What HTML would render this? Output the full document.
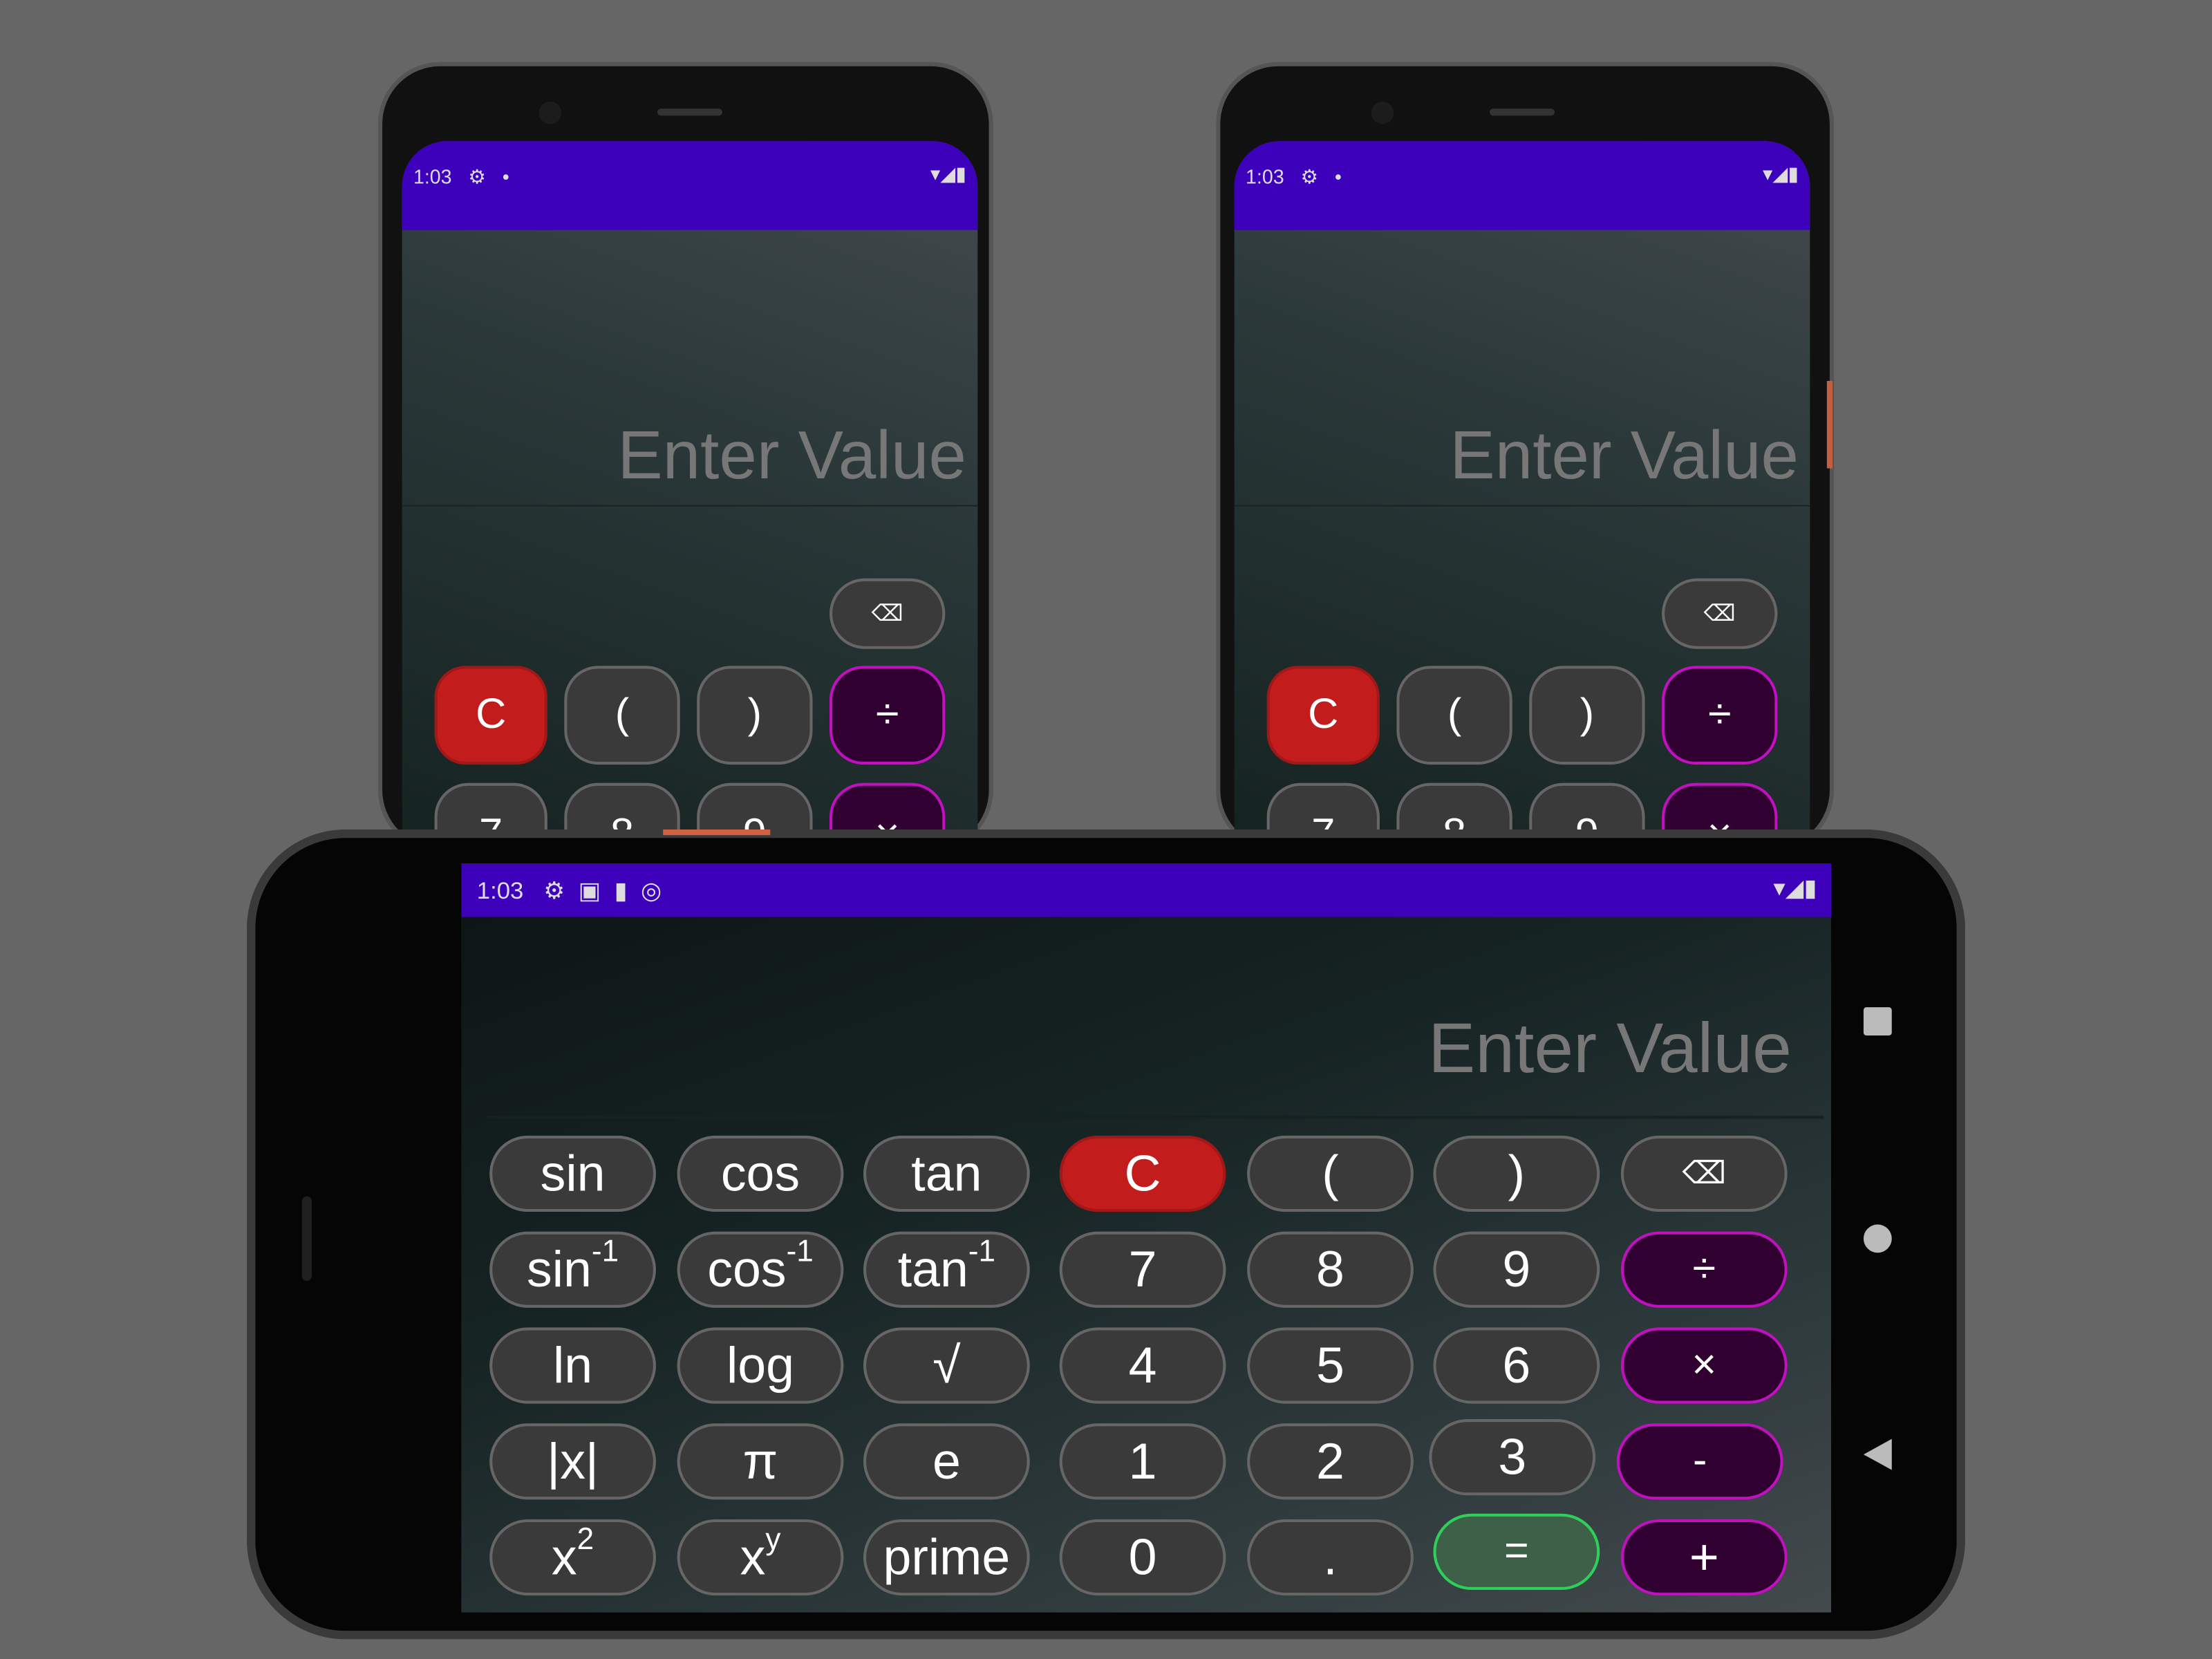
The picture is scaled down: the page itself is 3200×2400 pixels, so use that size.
<!DOCTYPE html>
<html><head><meta charset="utf-8"><style>
html,body{margin:0;padding:0;background:#666;width:3200px;height:2400px;overflow:hidden}
#w{position:absolute;left:0;top:0;width:1568px;height:1176px;transform:scale(2.040816);transform-origin:0 0;font-family:"Liberation Sans",sans-serif}
.a{position:absolute}
.b{position:absolute;box-sizing:border-box;border:2px solid #666;background:#3a3a3a;color:#fff;display:flex;align-items:center;justify-content:center;border-radius:30px}
.op{background:#300030;border-color:#c010c0}
.red{background:#c21c1c;border-color:#a01818}
.eq{background:#3e5f48;border-color:#2ed05a}
.sb{background:#3d00bb;color:#ddd;font-size:14px}
.t{align-items:flex-start;padding-top:18px;font-size:30px}
sup{font-size:0.6em;vertical-align:0;position:relative;top:-0.6em}
</style></head><body><div id="w">

<div class="a" style="left:268px;top:44px;width:436px;height:560px;border-radius:44px;background:#111;border:3px solid #555;box-sizing:border-box"></div>
<div class="a" style="left:862px;top:44px;width:438px;height:560px;border-radius:44px;background:#111;border:3px solid #555;box-sizing:border-box"></div>
<div class="a" style="left:1295px;top:270px;width:4px;height:62px;background:#c06040"></div>

<div class="a" style="left:285px;top:100px;width:408px;height:500px;border-radius:32px 32px 0 0;overflow:hidden;background:linear-gradient(200deg,#434b4e 0%,#2c393a 40%,#142220 100%)">
 <div class="a sb" style="left:0;top:0;width:408px;height:63px"><span class="a" style="left:8px;top:17px">1:03 &nbsp; ⚙ &nbsp; •</span><span class="a" style="right:8px;top:15px">▾◢▮</span></div>
 <div class="a" style="right:8px;top:196px;font-size:48px;color:#777">Enter Value</div>
 <div class="a" style="left:0;top:258px;width:408px;height:1px;background:#1a2222"></div>
 <div class="b" style="left:303px;top:310px;width:82px;height:50px;font-size:16px">⌫</div>
 <div class="b red" style="left:23px;top:372px;width:80px;height:70px;border-radius:22px;font-size:30px">C</div>
 <div class="b" style="left:115px;top:372px;width:82px;height:70px;border-radius:24px;font-size:30px">(</div>
 <div class="b" style="left:209px;top:372px;width:82px;height:70px;border-radius:24px;font-size:30px">)</div>
 <div class="b op" style="left:303px;top:372px;width:82px;height:70px;border-radius:24px;font-size:30px">÷</div>
 <div class="b t" style="left:23px;top:455px;width:80px;height:70px;border-radius:24px">7</div>
 <div class="b t" style="left:115px;top:455px;width:82px;height:70px;border-radius:24px">8</div>
 <div class="b t" style="left:209px;top:455px;width:82px;height:70px;border-radius:24px">9</div>
 <div class="b op t" style="left:303px;top:455px;width:82px;height:70px;border-radius:24px">×</div>
</div>
<div class="a" style="left:875px;top:100px;width:408px;height:500px;border-radius:32px 32px 0 0;overflow:hidden;background:linear-gradient(200deg,#434b4e 0%,#2c393a 40%,#142220 100%)">
 <div class="a sb" style="left:0;top:0;width:408px;height:63px"><span class="a" style="left:8px;top:17px">1:03 &nbsp; ⚙ &nbsp; •</span><span class="a" style="right:8px;top:15px">▾◢▮</span></div>
 <div class="a" style="right:8px;top:196px;font-size:48px;color:#777">Enter Value</div>
 <div class="a" style="left:0;top:258px;width:408px;height:1px;background:#1a2222"></div>
 <div class="b" style="left:303px;top:310px;width:82px;height:50px;font-size:16px">⌫</div>
 <div class="b red" style="left:23px;top:372px;width:80px;height:70px;border-radius:22px;font-size:30px">C</div>
 <div class="b" style="left:115px;top:372px;width:82px;height:70px;border-radius:24px;font-size:30px">(</div>
 <div class="b" style="left:209px;top:372px;width:82px;height:70px;border-radius:24px;font-size:30px">)</div>
 <div class="b op" style="left:303px;top:372px;width:82px;height:70px;border-radius:24px;font-size:30px">÷</div>
 <div class="b t" style="left:23px;top:455px;width:80px;height:70px;border-radius:24px">7</div>
 <div class="b t" style="left:115px;top:455px;width:82px;height:70px;border-radius:24px">8</div>
 <div class="b t" style="left:209px;top:455px;width:82px;height:70px;border-radius:24px">9</div>
 <div class="b op t" style="left:303px;top:455px;width:82px;height:70px;border-radius:24px">×</div>
</div>
<div class="a" style="left:466px;top:77px;width:46px;height:5px;border-radius:3px;background:#333"></div>
<div class="a" style="left:1056px;top:77px;width:46px;height:5px;border-radius:3px;background:#333"></div>
<div class="a" style="left:382px;top:72px;width:16px;height:16px;border-radius:50%;background:#1c1c1c"></div>
<div class="a" style="left:972px;top:72px;width:16px;height:16px;border-radius:50%;background:#1c1c1c"></div>

<div class="a" style="left:175px;top:588px;width:1218px;height:574px;border-radius:70px;background:#050505;border:6px solid #3a3a3a;box-sizing:border-box"></div>
<div class="a" style="left:470px;top:588px;width:76px;height:4px;background:#d06040"></div>
<div class="a" style="left:214px;top:848px;width:7px;height:60px;border-radius:4px;background:#1f1f1f"></div>
<div class="a" style="left:327px;top:612px;width:971px;height:531px;overflow:hidden;background:linear-gradient(160deg,#0c1414 0%,#172424 40%,#2e3a3c 75%,#434a4c 100%)">
 <div class="a sb" style="left:0;top:0;width:971px;height:38px"><span class="a" style="left:11px;top:10px;font-size:17px">1:03 &nbsp; ⚙ &nbsp;▣ &nbsp;▮ &nbsp;◎</span><span class="a" style="right:10px;top:8px;font-size:17px">▾◢▮</span></div>
 <div class="a" style="right:28px;top:102px;font-size:50px;color:#777">Enter Value</div>
 <div class="a" style="left:18px;top:179px;width:948px;height:2px;background:#182020"></div>
</div>
<div class="a" style="left:1321px;top:714px;width:20px;height:20px;background:#bbb;border-radius:2px"></div>
<div class="a" style="left:1321px;top:868px;width:20px;height:20px;background:#bbb;border-radius:50%"></div>
<div class="a" style="left:1321px;top:1020px;width:0;height:0;border-top:11px solid transparent;border-bottom:11px solid transparent;border-right:20px solid #bbb"></div>

<div style="font-size:36px">
<div class="b" style="left:347px;top:805px;width:118px;height:54px">sin</div>
<div class="b" style="left:480px;top:805px;width:118px;height:54px">cos</div>
<div class="b" style="left:612px;top:805px;width:118px;height:54px">tan</div>
<div class="b red" style="left:751px;top:805px;width:118px;height:54px">C</div>
<div class="b" style="left:884px;top:805px;width:118px;height:54px">(</div>
<div class="b" style="left:1016px;top:805px;width:118px;height:54px">)</div>
<div class="b" style="left:1149px;top:805px;width:118px;height:54px;font-size:22px">⌫</div>

<div class="b" style="left:347px;top:873px;width:118px;height:54px">sin<sup>-1</sup></div>
<div class="b" style="left:480px;top:873px;width:118px;height:54px">cos<sup>-1</sup></div>
<div class="b" style="left:612px;top:873px;width:118px;height:54px">tan<sup>-1</sup></div>
<div class="b" style="left:751px;top:873px;width:118px;height:54px">7</div>
<div class="b" style="left:884px;top:873px;width:118px;height:54px">8</div>
<div class="b" style="left:1016px;top:873px;width:118px;height:54px">9</div>
<div class="b op" style="left:1149px;top:873px;width:118px;height:54px;font-size:30px">÷</div>

<div class="b" style="left:347px;top:941px;width:118px;height:54px">ln</div>
<div class="b" style="left:480px;top:941px;width:118px;height:54px">log</div>
<div class="b" style="left:612px;top:941px;width:118px;height:54px">√</div>
<div class="b" style="left:751px;top:941px;width:118px;height:54px">4</div>
<div class="b" style="left:884px;top:941px;width:118px;height:54px">5</div>
<div class="b" style="left:1016px;top:941px;width:118px;height:54px">6</div>
<div class="b op" style="left:1149px;top:941px;width:118px;height:54px;font-size:30px">×</div>

<div class="b" style="left:347px;top:1009px;width:118px;height:54px">|x|</div>
<div class="b" style="left:480px;top:1009px;width:118px;height:54px">π</div>
<div class="b" style="left:612px;top:1009px;width:118px;height:54px">e</div>
<div class="b" style="left:751px;top:1009px;width:118px;height:54px">1</div>
<div class="b" style="left:884px;top:1009px;width:118px;height:54px">2</div>
<div class="b" style="left:1013px;top:1006px;width:118px;height:54px">3</div>
<div class="b op" style="left:1146px;top:1009px;width:118px;height:54px;font-size:30px">-</div>

<div class="b" style="left:347px;top:1077px;width:118px;height:54px">x<sup>2</sup></div>
<div class="b" style="left:480px;top:1077px;width:118px;height:54px">x<sup>y</sup></div>
<div class="b" style="left:612px;top:1077px;width:118px;height:54px">prime</div>
<div class="b" style="left:751px;top:1077px;width:118px;height:54px">0</div>
<div class="b" style="left:884px;top:1077px;width:118px;height:54px">.</div>
<div class="b eq" style="left:1016px;top:1073px;width:118px;height:54px;font-size:30px">=</div>
<div class="b op" style="left:1149px;top:1077px;width:118px;height:54px">+</div>
</div>
</div></body></html>
